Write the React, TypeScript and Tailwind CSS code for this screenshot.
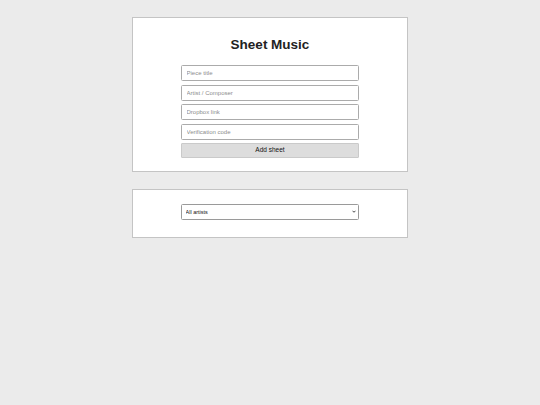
import React from 'react';

export default function App() {
    const fields = ['Piece title', 'Artist / Composer', 'Dropbox link', 'Verification code'];

    return (
        <div className="min-h-[405px] w-full bg-[#ebebeb] pt-[17px] flex flex-col items-center" style={{ fontFamily: '"Liberation Sans", Arial, sans-serif' }}>
            <div className="w-[276px] bg-white border border-[#c4c4c4] flex flex-col items-center pt-[18px] pb-[13px]">
                <h1 className="text-[13.5px] leading-[17px] font-bold text-[#222] mb-[12px]">Sheet Music</h1>
                <div className="w-[178px] flex flex-col gap-[3.5px]">
                    {fields.map(f => (
                        <input
                            key={f}
                            placeholder={f}
                            className="h-[16px] w-full border border-[#ababab] rounded-[1.5px] bg-white px-[4.5px] text-[6px] text-[#333] placeholder:text-[#8d8d8d] outline-none"
                        />
                    ))}
                    <button className="h-[14.5px] w-full bg-[#dddddd] border border-[#cacaca] rounded-[1px] text-[6.5px] text-[#111]">Add sheet</button>
                </div>
            </div>
            <div className="w-[276px] mt-[17px] bg-white border border-[#c4c4c4] flex justify-center pt-[14px] pb-[17px]">
                <div className="relative w-[178px] h-[16px]">
                    <select className="block appearance-none h-[16px] w-full border border-[#9a9a9a] rounded-[1.5px] bg-white px-[3.5px] py-0 text-[5.5px] leading-[14px] text-[#111] outline-none">
                        <option>All artists</option>
                    </select>
                    <svg className="absolute right-[3px] top-[6.5px] pointer-events-none" width="4" height="3" viewBox="0 0 10 8">
                        <path d="M1 2 L5 6 L9 2" stroke="#222" strokeWidth="2.2" fill="none" />
                    </svg>
                </div>
            </div>
        </div>
    );
}
